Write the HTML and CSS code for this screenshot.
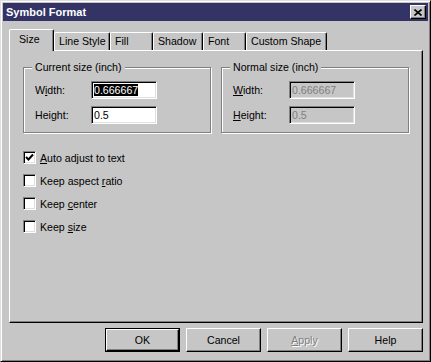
FILE: index.html
```html
<!DOCTYPE html>
<html lang="en">
<head>
  <meta charset="UTF-8">
  <title>Symbol Format</title>
  <link rel="stylesheet" href="styles.css">
</head>
<body>
  <div class="window">
    <div class="titlebar">
      <span class="title">Symbol Format</span>
      <div class="close-btn">
        <svg width="8" height="7" viewBox="0 0 8 7"><path d="M0.5 0.5 L7.5 6.5 M7.5 0.5 L0.5 6.5" stroke="#000" stroke-width="1.6"/></svg>
      </div>
    </div>

    <div class="tabs">
      <div class="tab active tab-size">Size</div>
      <div class="tab tab-line">Line Style</div>
      <div class="tab tab-fill">Fill</div>
      <div class="tab tab-shadow">Shadow</div>
      <div class="tab tab-font">Font</div>
      <div class="tab tab-custom">Custom Shape</div>
    </div>

    <div class="panel">
      <div class="groups">
        <fieldset class="group">
          <legend>Current size (inch)</legend>
          <div class="field-row">
            <span class="label">W<u>i</u>dth:</span>
            <div class="field"><span class="selected">0.666667</span></div>
          </div>
          <div class="field-row">
            <span class="label">Hei<u>g</u>ht:</span>
            <div class="field">0.5</div>
          </div>
        </fieldset>
        <fieldset class="group">
          <legend>Normal size (inch)</legend>
          <div class="field-row">
            <span class="label"><u>W</u>idth:</span>
            <div class="field disabled">0.666667</div>
          </div>
          <div class="field-row">
            <span class="label"><u>H</u>eight:</span>
            <div class="field disabled">0.5</div>
          </div>
        </fieldset>
      </div>

      <div class="checks">
        <div class="check-row">
          <div class="checkbox">
            <svg width="9" height="9" viewBox="0 0 9 9"><path d="M1 4 L3.5 6.5 L8 1.5" fill="none" stroke="#000" stroke-width="2"/></svg>
          </div>
          <span><u>A</u>uto adjust to text</span>
        </div>
        <div class="check-row">
          <div class="checkbox"></div>
          <span>Keep aspect <u>r</u>atio</span>
        </div>
        <div class="check-row">
          <div class="checkbox"></div>
          <span>Keep <u>c</u>enter</span>
        </div>
        <div class="check-row">
          <div class="checkbox"></div>
          <span>Keep <u>s</u>ize</span>
        </div>
      </div>
    </div>

    <div class="buttons">
      <div class="btn default"><span>OK</span></div>
      <div class="btn">Cancel</div>
      <div class="btn disabled"><u>A</u>pply</div>
      <div class="btn">Help</div>
    </div>
  </div>
</body>
</html>
```

FILE: styles.css
```css
* {
  margin: 0;
  padding: 0;
  box-sizing: border-box;
}

body {
  font-family: 'Liberation Sans', Arial, sans-serif;
  font-size: 10.6px;
  color: #000;
  background: #c6c6c6;
}

.window {
  width: 431px;
  height: 362px;
  background: #c6c6c6;
  border: 1px solid;
  border-color: #dfdfdf #000 #000 #dfdfdf;
  box-shadow: inset 1px 1px 0 #fff, inset -1px -1px 0 #808080;
  padding: 2px;
  display: flex;
  flex-direction: column;
}

.titlebar {
  height: 18px;
  background: #333366;
  display: flex;
  align-items: center;
  justify-content: space-between;
  padding: 0 2px 0 3px;
}

.title {
  color: #fff;
  font-weight: bold;
  font-size: 11px;
}

.close-btn {
  width: 16px;
  height: 14px;
  background: #c6c6c6;
  border: 1px solid;
  border-color: #fff #000 #000 #fff;
  box-shadow: inset -1px -1px 0 #808080;
  display: flex;
  align-items: center;
  justify-content: center;
}

.tabs {
  display: flex;
  align-items: flex-end;
  height: 21px;
  margin: 8px 0 0 6px;
  position: relative;
  z-index: 1;
}

.tab {
  height: 18px;
  border-top: 1px solid #fff;
  border-left: 1px solid #fff;
  border-right: 1px solid #000;
  border-radius: 2px 2px 0 0;
  box-shadow: inset -1px 0 0 #808080;
  display: flex;
  align-items: center;
  padding-left: 4px;
  padding-bottom: 1px;
  white-space: nowrap;
}

.tab.active {
  height: 22px;
  margin-bottom: -1px;
  background: #c6c6c6;
  padding-left: 9px;
  padding-bottom: 3px;
}

.tab-size { width: 45px; }
.tab-line { width: 56px; }
.tab-fill { width: 43px; }
.tab-shadow { width: 50px; }
.tab-font { width: 43px; }
.tab-custom { width: 81px; }

.panel {
  height: 273px;
  margin: 0 5px 0 6px;
  border: 1px solid;
  border-color: #fff #000 #000 #fff;
  box-shadow: inset -1px -1px 0 #808080;
  padding: 10px 0 0 13px;
}

.groups {
  display: flex;
  gap: 10px;
}

.group {
  width: 188px;
  border: 1px solid #808080;
  box-shadow: inset 1px 1px 0 #fff, 1px 1px 0 #fff;
  padding: 7px 11px 8px 11px;
  display: flex;
  flex-direction: column;
  gap: 7px;
}

.group legend {
  line-height: 13px;
  padding: 0 3px;
  margin-left: -3px;
  background: #c6c6c6;
}

.field-row {
  display: flex;
  align-items: center;
}

.label {
  width: 56px;
}

.field {
  width: 66px;
  height: 18px;
  background: #fff;
  border: 1px solid;
  border-color: #808080 #fff #fff #808080;
  box-shadow: inset 1px 1px 0 #000, inset -1px -1px 0 #dfdfdf;
  padding: 0 0 0 2px;
  line-height: 16px;
}

.field .selected {
  background: #000;
  color: #fff;
}

.field.disabled {
  background: #c6c6c6;
  color: #808080;
}

.checks {
  margin-top: 13px;
  display: flex;
  flex-direction: column;
}

.check-row {
  height: 23px;
  display: flex;
  align-items: center;
  gap: 4px;
}

.checkbox {
  width: 13px;
  height: 13px;
  background: #fff;
  border: 1px solid;
  border-color: #808080 #fff #fff #808080;
  box-shadow: inset 1px 1px 0 #000, inset -1px -1px 0 #dfdfdf;
  display: flex;
  align-items: center;
  justify-content: center;
}

.buttons {
  display: flex;
  justify-content: flex-end;
  gap: 6px;
  margin: 5px 5px 0 0;
}

.btn {
  width: 75px;
  height: 24px;
  border: 1px solid;
  border-color: #fff #000 #000 #fff;
  box-shadow: inset -1px -1px 0 #808080;
  display: flex;
  align-items: center;
  justify-content: center;
  padding-bottom: 1px;
}

.btn.default {
  border: 1px solid #000;
  box-shadow: none;
  padding: 0;
}

.btn.default span {
  width: 100%;
  height: 100%;
  border: 1px solid;
  border-color: #fff #000 #000 #fff;
  box-shadow: inset -1px -1px 0 #808080;
  display: flex;
  align-items: center;
  justify-content: center;
  padding-bottom: 1px;
}

.btn.disabled {
  color: #808080;
  text-shadow: 1px 1px 0 #fff;
}
```
